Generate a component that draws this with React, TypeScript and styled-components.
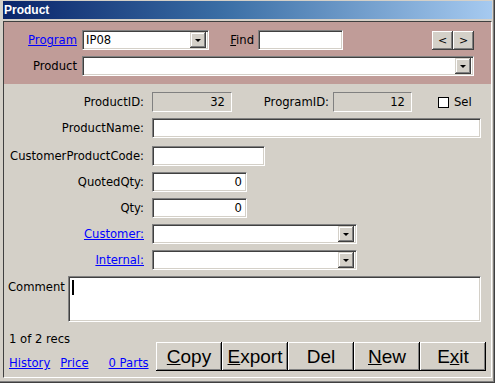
import styled, { createGlobalStyle } from 'styled-components';

const GlobalStyle = createGlobalStyle`
  html, body {
    margin: 0;
    padding: 0;
    background: #d4d0c8;
  }
  body {
    font-family: 'DejaVu Sans', Verdana, sans-serif;
    font-size: 11.6px;
    color: #000;
  }
`;

const Window = styled.div`
  width: 495px;
  height: 383px;
  box-sizing: border-box;
  padding: 1px 3px 5px 3px;
  background: #d4d0c8;
  display: flex;
  flex-direction: column;
  box-shadow: inset -1px -1px #404040, inset -2px -2px #808080;
`;

const TitleBar = styled.div`
  height: 18px;
  display: flex;
  align-items: center;
  padding-left: 1px;
  background: linear-gradient(to right, #0a246a 0%, #3a6ea5 45%, #a6caf0 100%);
  color: #fff;
  font-family: 'Liberation Sans', Arial, sans-serif;
  font-weight: bold;
  font-size: 12px;
`;

const Client = styled.div`
  flex: 1;
  margin-top: 2px;
  display: flex;
  flex-direction: column;
  border: 1px solid;
  border-color: #404040 #fff #fff #404040;
`;

const Header = styled.div`
  background: #c09c98;
  padding: 8px 17px 8px 0;
  display: flex;
  flex-direction: column;
  gap: 6px;
`;

const Row = styled.div<{ $top?: number }>`
  display: flex;
  align-items: center;
  height: 20px;
  margin-top: ${(p) => p.$top ?? 0}px;
`;

const Label = styled.div<{ $w: number; $gap?: number }>`
  width: ${(p) => p.$w}px;
  flex-shrink: 0;
  margin-right: ${(p) => p.$gap ?? 8}px;
  text-align: right;
  white-space: nowrap;
`;

const Link = styled.a`
  color: #0000ff;
  text-decoration: underline;
  cursor: pointer;
`;

const Field = styled.div<{ $w?: number; $flex?: boolean; $align?: string }>`
  box-sizing: border-box;
  height: 20px;
  width: ${(p) => (p.$w ? `${p.$w}px` : 'auto')};
  flex: ${(p) => (p.$flex ? 1 : 'none')};
  background: #fff;
  border: 1px solid;
  border-color: #808080 #fff #fff #808080;
  box-shadow: inset 1px 1px #404040, inset -1px -1px #d4d0c8;
  display: flex;
  align-items: center;
  justify-content: ${(p) => p.$align ?? 'flex-start'};
  padding: 0 4px 0 3px;
`;

const ReadOnly = styled(Field)`
  background: #d4d0c8;
  border-color: #808080 #fff #fff #808080;
  box-shadow: none;
  padding-right: 6px;
`;

const ComboField = styled(Field)`
  padding-right: 2px;
  justify-content: space-between;
`;

const DropButton = styled.div`
  width: 16px;
  height: 16px;
  box-sizing: border-box;
  background: #d4d0c8;
  box-shadow: inset -1px -1px #404040, inset 1px 1px #d4d0c8, inset -2px -2px #808080, inset 2px 2px #fff;
  display: flex;
  align-items: center;
  justify-content: center;

  &::after {
    content: '';
    border-left: 3px solid transparent;
    border-right: 3px solid transparent;
    border-top: 3px solid #000;
    margin-top: 1px;
  }
`;

const NavGroup = styled.div`
  display: flex;
  margin-left: auto;
`;

const NavButton = styled.div`
  width: 21px;
  height: 19px;
  box-sizing: border-box;
  background: #d4d0c8;
  box-shadow: inset -1px -1px #404040, inset 1px 1px #fff, inset -2px -2px #808080;
  display: flex;
  align-items: center;
  justify-content: center;
  font-size: 11px;
`;

const Form = styled.div`
  flex: 1;
  display: flex;
  flex-direction: column;
  padding: 8px 10px 0 0;
`;

const CheckBox = styled.div`
  width: 11px;
  height: 11px;
  box-sizing: border-box;
  background: #fff;
  border: 1px solid #000;
  margin-left: 26px;
  margin-right: 5px;
`;

const CommentRow = styled.div`
  display: flex;
  margin-top: 6px;
  padding-left: 4px;
`;

const CommentLabel = styled.div`
  width: 60px;
  padding-top: 4px;
`;

const CommentBox = styled(Field)`
  height: 46px;
  flex: 1;
  align-items: flex-start;
  padding-top: 3px;

  &::before {
    content: '';
    width: 2px;
    height: 15px;
    background: #000;
  }
`;

const Footer = styled.div`
  display: flex;
  align-items: flex-start;
  padding: 10px 0 0 5px;
  margin-right: -5px;
`;

const FooterLeft = styled.div`
  display: flex;
  flex-direction: column;
  gap: 10px;
  width: 148px;
`;

const Links = styled.div`
  display: flex;
  gap: 10px;
`;

const ButtonBar = styled.div`
  display: flex;
  margin-top: 10px;
  margin-left: auto;
`;

const BigButton = styled.div`
  width: 66px;
  height: 29px;
  box-sizing: border-box;
  background: #d4d0c8;
  box-shadow: inset -1px -1px #000, inset 1px 1px #fff, inset -2px -2px #808080;
  display: flex;
  align-items: center;
  justify-content: center;
  font-family: 'Liberation Sans', Arial, sans-serif;
  font-size: 19px;
`;

const Combo = ({ w, flex, value }: { w?: number; flex?: boolean; value?: string }) => (
  <ComboField $w={w} $flex={flex}>
    <span>{value}</span>
    <DropButton />
  </ComboField>
);

export default function App() {
  return (
    <>
      <GlobalStyle />
      <Window>
        <TitleBar>Product</TitleBar>
        <Client>
          <Header>
            <Row>
              <Label $w={73} $gap={5}>
                <Link>Program</Link>
              </Label>
              <Combo w={127} value="IP08" />
              <Label $w={45} $gap={4}>
                <u>F</u>ind
              </Label>
              <Field $w={85} />
              <NavGroup>
                <NavButton>&lt;</NavButton>
                <NavButton>&gt;</NavButton>
              </NavGroup>
            </Row>
            <Row>
              <Label $w={73} $gap={5}>Product</Label>
              <Combo flex />
            </Row>
          </Header>
          <Form>
            <Row>
              <Label $w={140}>ProductID:</Label>
              <ReadOnly $w={80} $align="flex-end">32</ReadOnly>
              <Label $w={97} $gap={4}>ProgramID:</Label>
              <ReadOnly $w={79} $align="flex-end">12</ReadOnly>
              <CheckBox />
              <span>Sel</span>
            </Row>
            <Row $top={6}>
              <Label $w={140}>ProductName:</Label>
              <Field $flex />
            </Row>
            <Row $top={8}>
              <Label $w={140}>CustomerProductCode:</Label>
              <Field $w={113} />
            </Row>
            <Row $top={6}>
              <Label $w={140}>QuotedQty:</Label>
              <Field $w={95} $align="flex-end">0</Field>
            </Row>
            <Row $top={6}>
              <Label $w={140}>Qty:</Label>
              <Field $w={95} $align="flex-end">0</Field>
            </Row>
            <Row $top={6}>
              <Label $w={140}>
                <Link>Customer:</Link>
              </Label>
              <Combo w={205} />
            </Row>
            <Row $top={6}>
              <Label $w={140}>
                <Link>Internal:</Link>
              </Label>
              <Combo w={205} />
            </Row>
            <CommentRow>
              <CommentLabel>Comment</CommentLabel>
              <CommentBox />
            </CommentRow>
            <Footer>
              <FooterLeft>
                <span>1 of 2 recs</span>
                <Links>
                  <Link>History</Link>
                  <Link>Price</Link>
                  <Link style={{ marginLeft: 10 }}>0 Parts</Link>
                </Links>
              </FooterLeft>
              <ButtonBar>
                <BigButton>
                  <span><u>C</u>opy</span>
                </BigButton>
                <BigButton>
                  <span><u>E</u>xport</span>
                </BigButton>
                <BigButton>Del</BigButton>
                <BigButton>
                  <span><u>N</u>ew</span>
                </BigButton>
                <BigButton>
                  <span>E<u>x</u>it</span>
                </BigButton>
              </ButtonBar>
            </Footer>
          </Form>
        </Client>
      </Window>
    </>
  );
}
